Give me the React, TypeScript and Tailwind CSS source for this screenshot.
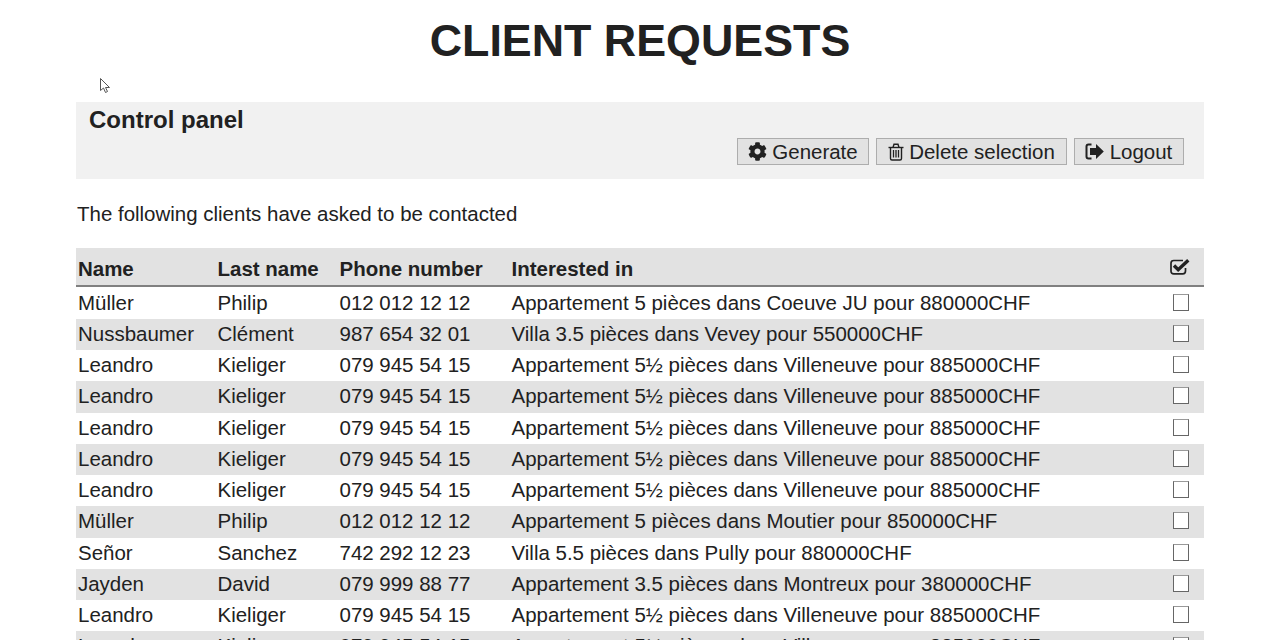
import React from 'react';
import { FaCog } from 'react-icons/fa';

const clients = [
  ['Müller', 'Philip', '012 012 12 12', 'Appartement 5 pièces dans Coeuve JU pour 880000CHF'],
  ['Nussbaumer', 'Clément', '987 654 32 01', 'Villa 3.5 pièces dans Vevey pour 550000CHF'],
  ['Leandro', 'Kieliger', '079 945 54 15', 'Appartement 5½ pièces dans Villeneuve pour 885000CHF'],
  ['Leandro', 'Kieliger', '079 945 54 15', 'Appartement 5½ pièces dans Villeneuve pour 885000CHF'],
  ['Leandro', 'Kieliger', '079 945 54 15', 'Appartement 5½ pièces dans Villeneuve pour 885000CHF'],
  ['Leandro', 'Kieliger', '079 945 54 15', 'Appartement 5½ pièces dans Villeneuve pour 885000CHF'],
  ['Leandro', 'Kieliger', '079 945 54 15', 'Appartement 5½ pièces dans Villeneuve pour 885000CHF'],
  ['Müller', 'Philip', '012 012 12 12', 'Appartement 5 pièces dans Moutier pour 850000CHF'],
  ['Señor', 'Sanchez', '742 292 12 23', 'Villa 5.5 pièces dans Pully pour 880000CHF'],
  ['Jayden', 'David', '079 999 88 77', 'Appartement 3.5 pièces dans Montreux pour 380000CHF'],
  ['Leandro', 'Kieliger', '079 945 54 15', 'Appartement 5½ pièces dans Villeneuve pour 885000CHF'],
  ['Leandro', 'Kieliger', '079 945 54 15', 'Appartement 5½ pièces dans Villeneuve pour 885000CHF'],
];

const TrashIcon = () => (
  <svg width="16" height="18" viewBox="0 0 16 18" fill="none" stroke="currentColor">
    <path d="M0.5 4.5H15.5" strokeWidth="1.4" />
    <path d="M5 4.5L6 1.2H10L11 4.5" strokeWidth="1.4" />
    <path d="M2.5 4.5V15.5Q2.5 17 4 17H12Q13.5 17 13.5 15.5V4.5" strokeWidth="1.4" />
    <path d="M5.5 7V14.5M8 7V14.5M10.5 7V14.5" strokeWidth="1.3" />
  </svg>
);

const LogoutIcon = () => (
  <svg width="19" height="17" viewBox="0 0 19 17" fill="none" className="-ml-[1px] mr-[1px]">
    <path d="M6.5 1.5H3.5Q1.5 1.5 1.5 3.5V13.5Q1.5 15.5 3.5 15.5H6.5" stroke="currentColor" strokeWidth="2" />
    <path d="M5 5H11V1L18.8 8.5L11 16V12H5Z" fill="currentColor" />
  </svg>
);

const CheckSquareIcon = () => (
  <svg width="20" height="17" viewBox="0 0 20 17" fill="none">
    <path d="M15.5 10V13Q15.5 15.8 12.7 15.8H3.8Q1 15.8 1 13V5.3Q1 2.5 3.8 2.5H13" stroke="currentColor" strokeWidth="1.7" />
    <path d="M4 7.5L8.2 11.7L18.3 2.2" stroke="currentColor" strokeWidth="3.4" />
  </svg>
);

const CursorIcon = () => (
  <svg width="11" height="16" viewBox="0 0 11 16" fill="white" stroke="#555" strokeWidth="1" className="absolute left-[100px] top-[78px]">
    <path d="M0.5 0.5V12.5L3.5 10L5.5 14.5L7.5 13.5L5.5 9.5H9.5Z" />
  </svg>
);

const ToolButton: React.FC<{ icon: React.ReactNode; label: string; width: string }> = ({ icon, label, width }) => (
  <button className={`${width} h-[27px] flex items-center justify-center gap-[5px] bg-[#e2e2e2] border border-[#adadad] text-[20.48px] text-[#212121]`}>
    {icon}
    <span className="translate-y-[1px]">{label}</span>
  </button>
);

export default function App() {
  return (
    <div className="relative h-[640px] overflow-hidden bg-white text-[#212121] font-['Liberation_Sans',sans-serif]">
      <CursorIcon />
      <h1 className="h-[102px] pt-[12px] text-center text-[44.8px] leading-[56px] font-bold">CLIENT REQUESTS</h1>
      <div className="mx-[76px]">
        <div className="h-[77px] bg-[#f1f1f1] pl-[13px] pr-[20px] pt-[4px]">
          <h2 className="text-[24px] leading-[27px] font-bold">Control panel</h2>
          <div className="mt-[5px] flex justify-end gap-[7px]">
            <ToolButton width="w-[132px]" icon={<FaCog className="w-[19px] h-[19px]" />} label="Generate" />
            <ToolButton width="w-[191px]" icon={<TrashIcon />} label="Delete selection" />
            <ToolButton width="w-[110px]" icon={<LogoutIcon />} label="Logout" />
          </div>
        </div>
        <p className="h-[69px] pl-px pt-[23px] text-[20.48px] leading-[23px]">The following clients have asked to be contacted</p>
        <table className="w-[1128px] table-fixed border-collapse text-[20.48px] leading-[23px]">
          <colgroup>
            <col className="w-[139.5px]" />
            <col className="w-[122px]" />
            <col className="w-[172px]" />
            <col />
            <col className="w-[48px]" />
          </colgroup>
          <thead>
            <tr className="h-[38px] bg-[#e2e2e2] border-b-2 border-[#808080] text-left">
              <th className="pl-[2px] pt-[3px] font-bold">Name</th>
              <th className="pl-[2px] pt-[3px] font-bold">Last name</th>
              <th className="pl-[2px] pt-[3px] font-bold">Phone number</th>
              <th className="pl-[2px] pt-[3px] font-bold">Interested in</th>
              <th className="pl-[14px]"><CheckSquareIcon /></th>
            </tr>
          </thead>
          <tbody>
            <tr className="h-[1.5px]" />
            {clients.map((c, i) => (
              <tr key={i} className={`h-[31.25px] ${i % 2 === 1 ? 'bg-[#e2e2e2]' : 'bg-white'}`}>
                <td className="pl-[2px]"><span className="block -translate-y-[0.6px]">{c[0]}</span></td>
                <td className="pl-[2px]"><span className="block -translate-y-[0.6px]">{c[1]}</span></td>
                <td className="pl-[2px]"><span className="block -translate-y-[0.6px]">{c[2]}</span></td>
                <td className="pl-[2px]"><span className="block -translate-y-[0.6px]">{c[3]}</span></td>
                <td className="pl-[17px] align-middle">
                  <div className="w-[16px] h-[17px] -translate-y-[1px] bg-white border border-[#666666] border-t-[#999999]" />
                </td>
              </tr>
            ))}
          </tbody>
        </table>
      </div>
    </div>
  );
}
